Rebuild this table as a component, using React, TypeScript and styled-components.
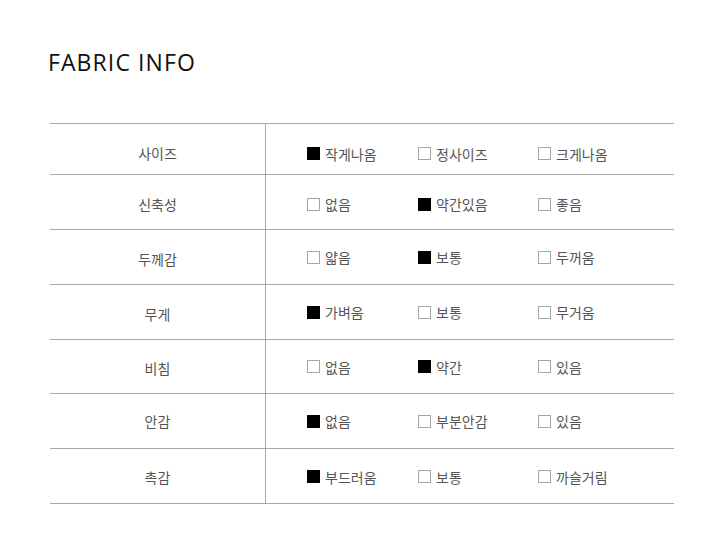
import React from "react";
import styled, { createGlobalStyle } from "styled-components";

const Global = createGlobalStyle`
  html, body { margin: 0; padding: 0; background: #fff; }
  body { font-family: "Noto Sans CJK KR", "Noto Sans", sans-serif; }
`;

const Page = styled.div`
  width: 726px;
  height: 559px;
  box-sizing: border-box;
  padding: 44px 52px 0 50px;
`;

const Title = styled.h1`
  margin: 0 0 0 -2px;
  font-family: "Open Sans", "Noto Sans", sans-serif;
  font-weight: 400;
  font-size: 23px;
  line-height: 36px;
  color: #111;
  letter-spacing: 1.1px;
`;

const Table = styled.div`
  margin-top: 43px;
  border-top: 1px solid #a9a9a9;
`;

const Row = styled.div<{ $h: number }>`
  display: grid;
  grid-template-columns: 215px 1fr;
  height: ${(p) => p.$h}px;
  box-sizing: border-box;
  border-bottom: 1px solid #a9a9a9;
`;

const Label = styled.div<{ $shift: number }>`
  display: flex;
  align-items: center;
  justify-content: center;
  font-size: 14px;
  color: #555;
  padding-top: ${(p) => p.$shift}px;
`;

const Options = styled.div<{ $shift: number }>`
  display: grid;
  grid-template-columns: 111px 120px auto;
  align-items: center;
  padding-left: 41px;
  padding-top: ${(p) => p.$shift}px;
  border-left: 1px solid #a9a9a9;
`;

const Option = styled.div`
  display: flex;
  align-items: center;
  gap: 5px;
  font-size: 14px;
  color: #555;
  white-space: nowrap;
`;

const Box = styled.span<{ $on: boolean }>`
  display: inline-block;
  flex: none;
  box-sizing: border-box;
  width: ${(p) => (p.$on ? 13 : 13)}px;
  height: ${(p) => (p.$on ? 13 : 13)}px;
  background: ${(p) => (p.$on ? "#000" : "#fff")};
  border: 1px solid ${(p) => (p.$on ? "#000" : "#a6a6a6")};
`;

type RowData = {
  label: string;
  opts: string[];
  on: number;
  h: number;
  lshift: number;
  oshift: number;
};

const rows: RowData[] = [
  { label: "사이즈", opts: ["작게나옴", "정사이즈", "크게나옴"], on: 0, h: 51, lshift: 8, oshift: 9 },
  { label: "신축성", opts: ["없음", "약간있음", "좋음"], on: 1, h: 55, lshift: 4, oshift: 4 },
  { label: "두께감", opts: ["얇음", "보통", "두꺼움"], on: 1, h: 55, lshift: 4, oshift: -1 },
  { label: "무게", opts: ["가벼움", "보통", "무거움"], on: 0, h: 55, lshift: 3, oshift: 0 },
  { label: "비침", opts: ["없음", "약간", "있음"], on: 1, h: 54, lshift: 3, oshift: 0 },
  { label: "안감", opts: ["없음", "부분안감", "있음"], on: 0, h: 55, lshift: 0, oshift: -2 },
  { label: "촉감", opts: ["부드러움", "보통", "까슬거림"], on: 0, h: 55, lshift: 1, oshift: 1 },
];

export default function App() {
  return (
    <Page>
      <Global />
      <Title>FABRIC INFO</Title>
      <Table>
        {rows.map((r) => (
          <Row key={r.label} $h={r.h}>
            <Label $shift={r.lshift}>{r.label}</Label>
            <Options $shift={r.oshift}>
              {r.opts.map((o, i) => (
                <Option key={o + i}>
                  <Box $on={i === r.on} />
                  {o}
                </Option>
              ))}
            </Options>
          </Row>
        ))}
      </Table>
    </Page>
  );
}
